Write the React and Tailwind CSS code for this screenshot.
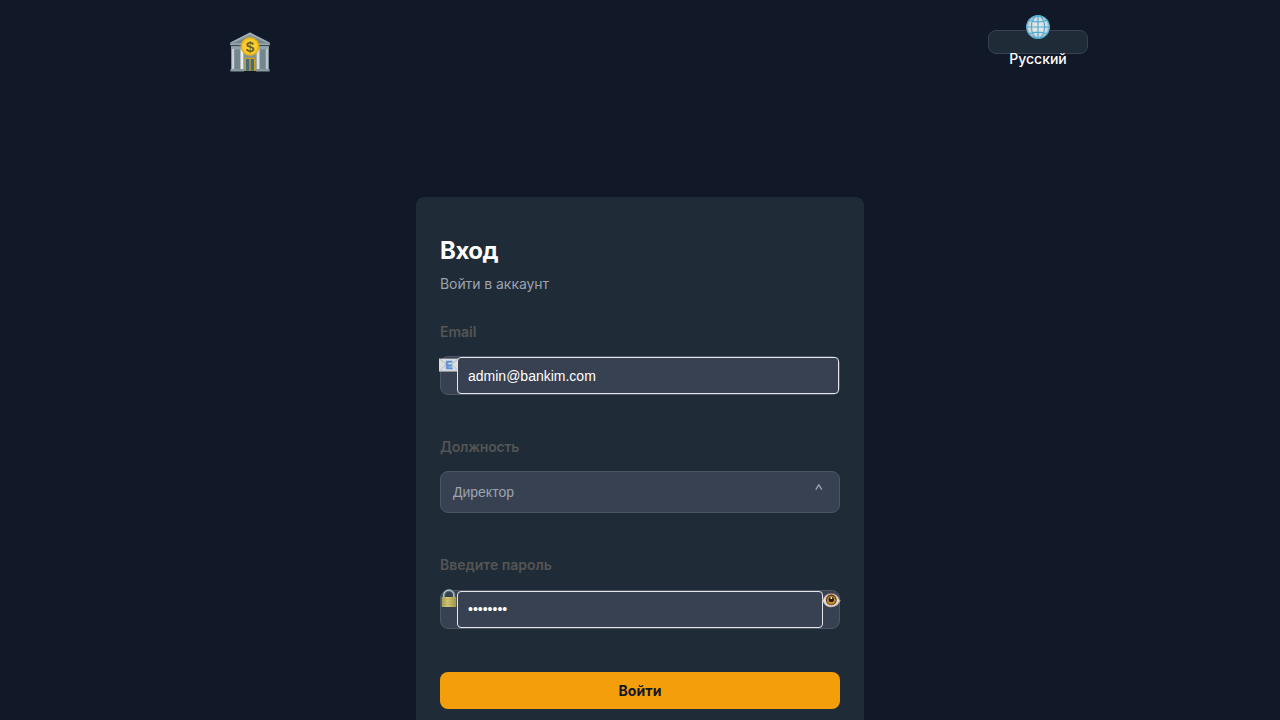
import React, { useState } from "react";

function BankIcon() {
  return (
    <svg viewBox="0 0 40 40" className="h-10 w-10 shrink-0">
      <defs>
        <linearGradient id="roof" x1="0" y1="0" x2="0" y2="1">
          <stop offset="0" stopColor="#8fa0a8" />
          <stop offset="1" stopColor="#6b7e87" />
        </linearGradient>
        <linearGradient id="pillar" x1="0" y1="0" x2="1" y2="0">
          <stop offset="0" stopColor="#c2ccd3" />
          <stop offset="0.45" stopColor="#ffffff" />
          <stop offset="1" stopColor="#b5c0c6" />
        </linearGradient>
        <radialGradient id="coin">
          <stop offset="0" stopColor="#ffe04d" />
          <stop offset="0.75" stopColor="#f8ca28" />
          <stop offset="1" stopColor="#d9a214" />
        </radialGradient>
      </defs>
      <path d="M1.2 14h37.6v25H1.2z" fill="#81949b" />
      <path d="M4.8 18h5.4v19H4.8zM29.8 18h5.4v19h-5.4z" fill="#738790" />
      <path d="M20 .4 39.8 10.5v3H.2v-3z" fill="url(#roof)" />
      <path d="M20 .6 39.8 10.7H36.5L20 2.9 3.5 10.7H.2z" fill="#9caab1" />
      <path d="M.2 11.5h39.6v1.3H.2z" fill="#a4b2b8" />
      <path d="M1 14.5h38V17H1z" fill="#91a2a9" />
      <path d="M1.7 17h2.4v20.5H1.7zM10.5 17h2.8v20.5h-2.8zM26.7 17h2.8v20.5h-2.8zM35.9 17h2.4v20.5h-2.4z" fill="url(#pillar)" />
      <path d="M14.5 25.6h11v13.2h-11z" fill="#c99d1d" />
      <path d="M16 27h3.3v11.8H16zM20.7 27H24v11.8h-3.3z" fill="#456c7c" />
      <path d="M.4 37h13.6v2.4H.4zM26 37h13.6v2.4H26z" fill="#8799a0" />
      <circle cx="20" cy="14.5" r="9.4" fill="url(#coin)" />
      <text x="20" y="19.9" textAnchor="middle" className="fill-[#765d1f] font-['Liberation_Sans',sans-serif] text-[15.5px] font-bold">$</text>
    </svg>
  );
}

function GlobeIcon() {
  return (
    <svg viewBox="0 0 24 24" className="h-6 w-6 shrink-0">
      <defs>
        <radialGradient id="globe">
          <stop offset="0" stopColor="#eeeeec" />
          <stop offset="0.75" stopColor="#d3dade" />
          <stop offset="1" stopColor="#9dbdca" />
        </radialGradient>
      </defs>
      <circle cx="12" cy="12" r="11.4" fill="url(#globe)" stroke="#54a9ca" strokeWidth="1.1" />
      <g fill="none" stroke="#4fabd0" strokeWidth="1.2">
        <path d="M12 .7v22.6M.8 12h22.4M3 5.2q9 3.4 18 0M3 18.8q9-3.4 18 0" />
        <ellipse cx="12" cy="12" rx="6.6" ry="11.3" />
      </g>
    </svg>
  );
}

function MailIcon() {
  return (
    <svg viewBox="0 0 20 14" className="h-3.5 w-5 shrink-0">
      <path d="M0 .6h19.8v12.8H0z" fill="#dcdddf" />
      <path d="m.6 1 9.2 7.2L19.2 1M.6 12.8 7 6.5m12.2 6.3L13 6.5" fill="none" stroke="#aeb3bb" strokeWidth=".8" />
      <path d="M0 13.1h19.8" stroke="#b9bcc2" strokeWidth=".6" />
      <text x="10" y="11" textAnchor="middle" className="fill-[#5a94d8] stroke-[#5a94d8] stroke-[0.7px] font-['Liberation_Sans',sans-serif] text-[10.5px] font-bold">E</text>
    </svg>
  );
}

function LockIcon() {
  return (
    <svg viewBox="0 0 16 19" className="h-[19px] w-4 shrink-0">
      <defs>
        <linearGradient id="brass" x1="0" y1="0" x2="1" y2="0">
          <stop offset="0" stopColor="#a89d4b" />
          <stop offset="0.4" stopColor="#d2c776" />
          <stop offset="1" stopColor="#a2974a" />
        </linearGradient>
      </defs>
      <path d="M2.9 9V6.3a5.1 5.1 0 0 1 10.2 0V9" fill="none" stroke="#71858f" strokeWidth="2.4" />
      <path d="M2.6 9V6.3a5.1 5.1 0 0 1 10.2 0V9" fill="none" stroke="#bdcdd6" strokeWidth="1" />
      <rect x=".7" y="8" width="14.6" height="10" rx=".6" fill="url(#brass)" />
      <path d="M1 10.5h14M1 13h14M1 15.5h14" stroke="#8f8336" strokeWidth=".2" />
    </svg>
  );
}

function EyeIcon() {
  return (
    <svg viewBox="0 0 19 16" className="h-4 w-[19px] shrink-0">
      <path d="M.4 8.2C2 2.8 5.6.8 9.5.9c4.5.1 7.2 3.1 9.1 7.7-2 4.8-5.2 6.7-9.2 6.7C5.2 15.3 2 13.3.4 8.2z" fill="#bd9c91" />
      <path d="M1 8.3C2.8 3.4 6 2 9.5 2c4 0 6.3 2.5 7.9 6.6-1.8 4.2-4.6 6-8.1 6C5.3 14.6 2.5 12.6 1 8.3z" fill="#dfdddd" />
      <path d="M.9 7.4C2.9 3 5.8 1.3 9.6 1.4c4 .1 6.6 2.8 8.4 7" fill="none" stroke="#73584e" strokeWidth=".8" />
      <circle cx="9.3" cy="7.8" r="5.5" fill="#68431f" />
      <circle cx="9.3" cy="8.3" r="4.3" fill="#c48c24" />
      <circle cx="9.3" cy="7.4" r="2.6" fill="#251b1b" />
      <circle cx="9.3" cy="5.9" r="1" fill="#fff" />
    </svg>
  );
}

function Label({ children }) {
  return <label className="block h-5 text-sm font-semibold leading-5 text-[#555555]">{children}</label>;
}

export default function App() {
  const [email, setEmail] = useState("admin@bankim.com");
  const [password, setPassword] = useState("password");
  const input =
    "h-[37px] min-w-0 flex-1 rounded border border-[#e5e7eb] bg-[#374151] px-2.5 font-['Liberation_Sans',sans-serif] text-sm text-white outline-none";
  return (
    <div className="flex h-screen flex-col overflow-hidden bg-[#111827] font-[Inter,sans-serif]">
      <header className="flex h-[197px] shrink-0 items-start justify-between pl-[230px] pr-48">
        <div className="pt-8"><BankIcon /></div>
        <button className="mt-[30px] flex h-6 w-[100px] flex-col items-center justify-center rounded-lg border border-[#374151] bg-[#1f2b37] text-sm font-medium leading-5 text-white">
          <span className="flex h-[34px] shrink-0 items-start"><GlobeIcon /></span>
          <span className="h-5 shrink-0">Русский</span>
        </button>
      </header>
      <main className="mx-auto h-[560px] w-[448px] shrink-0 rounded-lg bg-[#1f2b37] px-6 pt-[38px]">
        <h1 className="text-2xl font-bold leading-8 tracking-[-0.5px] text-white">Вход</h1>
        <p className="mt-[7px] text-sm leading-5 tracking-[-0.07px] text-[#9ca3af]">Войти в аккаунт</p>
        <form className="mt-7" onSubmit={(e) => e.preventDefault()}>
          <Label>Email</Label>
          <div className="mt-3.5 flex h-[39px] rounded-lg border border-[#4b5563] bg-[#374151]">
            <span className="-ml-0.5 mt-px flex w-[18px] shrink-0 items-start"><MailIcon /></span>
            <input className={input} type="email" value={email} onChange={(e) => setEmail(e.target.value)} />
          </div>
          <div className="mt-[42px] tracking-[-0.2px]"><Label>Должность</Label></div>
          <button type="button" className="mt-3.5 flex h-[42px] w-full items-center justify-between rounded-lg border border-[#4b5563] bg-[#374151] pl-3 pr-4 font-['Liberation_Sans',sans-serif] text-sm text-[#9ca3af]">
            <span>Директор</span>
            <svg viewBox="0 0 8 6" className="mb-2.5 h-1.5 w-2" fill="none" stroke="#9ca3af" strokeWidth="1.3">
              <path d="M.8 5.6 3.8 .8l3 4.8" />
            </svg>
          </button>
          <div className="mt-[42px]"><Label>Введите пароль</Label></div>
          <div className="mt-[15px] flex h-[39px] rounded-lg border border-[#4b5563] bg-[#374151]">
            <span className="-mt-[2px] flex w-4 shrink-0 items-start"><LockIcon /></span>
            <input className={`${input} pb-0.5`} type="password" value={password} onChange={(e) => setPassword(e.target.value)} />
            <button type="button" className="mt-px flex w-4 shrink-0 items-start justify-center"><EyeIcon /></button>
          </div>
          <button className="mt-[43px] h-[37px] w-full rounded-lg bg-[#f59e0b] text-sm font-bold tracking-[0.1px] text-[#111827]">Войти</button>
        </form>
      </main>
    </div>
  );
}
